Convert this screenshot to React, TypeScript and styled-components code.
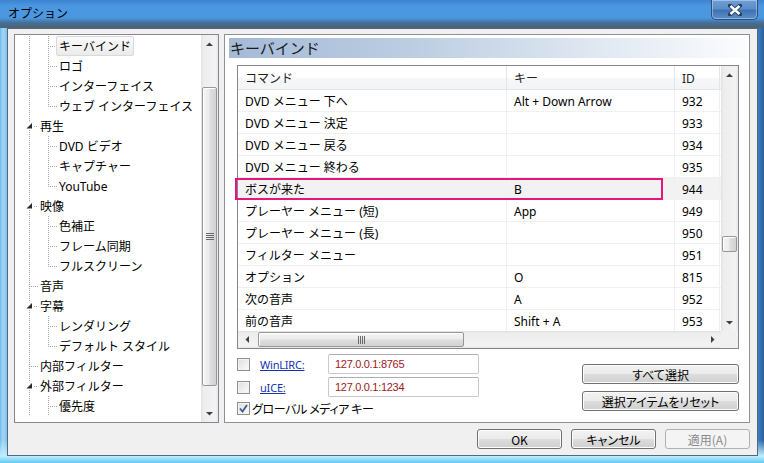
import React from 'react'
import styled, { createGlobalStyle, css } from 'styled-components'

const GlobalStyle = createGlobalStyle`
  html, body {
    margin: 0;
    padding: 0;
  }
  body {
    width: 764px;
    height: 463px;
    overflow: hidden;
    font-family: 'Noto Sans', 'Noto Sans CJK JP', sans-serif;
    font-size: 12px;
    color: #000;
  }
  * {
    box-sizing: border-box;
  }
`

const GOTHIC = `'Noto Sans CJK JP', sans-serif`

const Window = styled.div`
  width: 764px;
  height: 463px;
  display: flex;
  flex-direction: column;
  padding: 0 6px 7px 7px;
  background: linear-gradient(to bottom, rgba(255, 255, 255, 0) 440px, #bfeefc 456px, #63c9f2 463px),
    linear-gradient(to right, #6fb9ec 0, #a4d8f6 3px, #7cc1ee 7px, #5aa3e4 50%, #3f86d4 99%, #2c5e9a 100%);
`

const TitleBar = styled.div`
  height: 28px;
  margin: 0 -6px 0 -7px;
  padding: 0 6px 0 8px;
  display: flex;
  justify-content: space-between;
  align-items: flex-start;
  background: linear-gradient(to bottom, rgba(0, 0, 0, 0) 18px, rgba(60, 60, 60, 0.45) 23px, rgba(80, 76, 70, 0.7) 28px),
    linear-gradient(to bottom, #3b82d0 0, #4c98e0 6px, #4b96de 100%);
`

const TitleText = styled.span`
  font-family: ${GOTHIC};
  font-size: 12px;
  line-height: 16px;
  padding-top: 5px;
  color: #000;
`

const CloseButton = styled.div`
  width: 47px;
  height: 20px;
  display: flex;
  align-items: center;
  justify-content: center;
  border: 1px solid #2c4f7c;
  border-top: none;
  border-radius: 0 0 5px 5px;
  background: linear-gradient(to bottom, #6e9fd5 0, #5b8ec8 45%, #3f73b2 55%, #5a8fcc 100%);
  box-shadow: inset 0 0 0 1px rgba(255, 255, 255, 0.35);
`

const Client = styled.div`
  flex: 1;
  display: flex;
  flex-direction: column;
  background: #f0f0f0;
  border: 1px solid #56677a;
  padding: 5px 7px 0 6px;
`

const Body = styled.div`
  height: 389px;
  display: grid;
  grid-template-columns: 205px 1fr;
  column-gap: 5px;
`

/* ---------- tree ---------- */

const TreePanel = styled.div`
  border: 1px solid #828790;
  background: #fff;
  display: flex;
  overflow: hidden;
`

const TreeList = styled.div`
  flex: 1;
  padding: 1px 0 0 4px;
  overflow: hidden;
`

const TreeRow = styled.div`
  height: 20px;
  display: flex;
  align-items: center;
`

const TreeLabel = styled.span<{ $selected?: boolean }>`
  height: 20px;
  line-height: 16px;
  padding: 2px 2px 0 2px;
  border: 1px solid transparent;
  margin-left: -1px;
  white-space: nowrap;
  ${p =>
    p.$selected &&
    css`
      border-color: #d9d9d9;
      border-radius: 2px;
      background: linear-gradient(to bottom, #fafafa, #ebebeb);
    `}
`

const DOT = '#a5a5a5'

type Cell = 'through' | 'branch' | 'lastBranch' | 'expander'

const TreeCell = ({ kind }: { kind: Cell }) => (
  <svg width={19} height={20} style={{ display: 'block', flex: 'none' }}>
    {kind === 'through' && <line x1={10.5} y1={0} x2={10.5} y2={20} stroke={DOT} strokeDasharray="1 1" />}
    {kind === 'branch' && (
      <>
        <line x1={10.5} y1={0} x2={10.5} y2={20} stroke={DOT} strokeDasharray="1 1" />
        <line x1={12} y1={10.5} x2={19} y2={10.5} stroke={DOT} strokeDasharray="1 1" />
      </>
    )}
    {kind === 'lastBranch' && (
      <>
        <line x1={10.5} y1={0} x2={10.5} y2={11} stroke={DOT} strokeDasharray="1 1" />
        <line x1={12} y1={10.5} x2={19} y2={10.5} stroke={DOT} strokeDasharray="1 1" />
      </>
    )}
    {kind === 'expander' && (
      <>
        <line x1={10.5} y1={0} x2={10.5} y2={6} stroke={DOT} strokeDasharray="1 1" />
        <line x1={10.5} y1={14} x2={10.5} y2={20} stroke={DOT} strokeDasharray="1 1" />
        <polygon points="13,7 13,12.5 7.5,12.5" fill="#2b2b2b" />
        <line x1={15} y1={10.5} x2={19} y2={10.5} stroke={DOT} strokeDasharray="1 1" />
      </>
    )}
  </svg>
)

type TreeItem = { label: string; level: 1 | 2; open?: boolean; last?: boolean; selected?: boolean }

const treeItems: TreeItem[] = [
  { label: 'キーバインド', level: 2, selected: true },
  { label: 'ロゴ', level: 2 },
  { label: 'インターフェイス', level: 2 },
  { label: 'ウェブ インターフェイス', level: 2, last: true },
  { label: '再生', level: 1, open: true },
  { label: 'DVD ビデオ', level: 2 },
  { label: 'キャプチャー', level: 2 },
  { label: 'YouTube', level: 2, last: true },
  { label: '映像', level: 1, open: true },
  { label: '色補正', level: 2 },
  { label: 'フレーム同期', level: 2 },
  { label: 'フルスクリーン', level: 2, last: true },
  { label: '音声', level: 1 },
  { label: '字幕', level: 1, open: true },
  { label: 'レンダリング', level: 2 },
  { label: 'デフォルト スタイル', level: 2, last: true },
  { label: '内部フィルター', level: 1 },
  { label: '外部フィルター', level: 1, open: true },
  { label: '優先度', level: 2 },
]

/* ---------- scrollbars ---------- */

const VBar = styled.div`
  width: 17px;
  flex: none;
  display: flex;
  flex-direction: column;
  background: linear-gradient(to right, #e2e2e2 0, #ededed 15%, #f3f3f3 85%, #e6e6e6 100%);
`

const HBar = styled.div`
  height: 17px;
  display: flex;
  background: linear-gradient(to bottom, #e2e2e2 0, #ededed 15%, #f3f3f3 85%, #e6e6e6 100%);
`

const ArrowBox = styled.div`
  width: 17px;
  height: 17px;
  flex: none;
  display: flex;
  align-items: center;
  justify-content: center;
`

const Track = styled.div<{ $vertical?: boolean }>`
  flex: 1;
  display: flex;
  flex-direction: ${p => (p.$vertical ? 'column' : 'row')};
`

const VThumb = styled.div<{ $offset: number; $size: number }>`
  margin: ${p => p.$offset}px 1px 0 1px;
  height: ${p => p.$size}px;
  border: 1px solid #979797;
  border-radius: 2px;
  background: linear-gradient(to right, #f5f5f5 0, #ececec 45%, #dedede 55%, #d2d2d2 100%);
  box-shadow: inset 1px 1px 0 #fff;
  display: flex;
  align-items: center;
  justify-content: center;
`

const HThumb = styled.div<{ $offset: number; $size: number }>`
  margin: 1px 0 1px ${p => p.$offset}px;
  width: ${p => p.$size}px;
  border: 1px solid #979797;
  border-radius: 2px;
  background: linear-gradient(to bottom, #f5f5f5 0, #ececec 45%, #dedede 55%, #d2d2d2 100%);
  box-shadow: inset 1px 1px 0 #fff;
  display: flex;
  align-items: center;
  justify-content: center;
`

const Corner = styled.div`
  width: 17px;
  height: 17px;
  background: #f0f0f0;
`

type Dir = 'up' | 'down' | 'left' | 'right'

const Arrow = ({ dir }: { dir: Dir }) => {
  const vertical = dir === 'up' || dir === 'down'
  const points = {
    up: '0,4 3.5,0.5 7,4',
    down: '0,0 7,0 3.5,3.5',
    left: '4,0 4,7 0.5,3.5',
    right: '0,0 0,7 3.5,3.5',
  }[dir]
  return (
    <svg width={vertical ? 7 : 4} height={vertical ? 4 : 7} style={{ display: 'block' }}>
      <polygon points={points} fill="#3f3f3f" />
    </svg>
  )
}

const Grip = ({ vertical }: { vertical?: boolean }) => (
  <svg width={vertical ? 8 : 7} height={vertical ? 7 : 8} style={{ display: 'block' }}>
    {[0, 2, 4, 6].map(i =>
      vertical ? (
        <line key={i} x1={0} y1={i + 0.5} x2={8} y2={i + 0.5} stroke="#6a6a6a" />
      ) : (
        <line key={i} x1={i + 0.5} y1={0} x2={i + 0.5} y2={8} stroke="#6a6a6a" />
      )
    )}
  </svg>
)

/* ---------- right page ---------- */

const PagePanel = styled.div`
  border: 1px solid #8e9196;
  background: #fff;
  padding: 3px 2px 0 4px;
  display: flex;
  flex-direction: column;
`

const PageHeader = styled.div`
  height: 20px;
  line-height: 20px;
  padding-left: 1px;
  font-family: ${GOTHIC};
  font-size: 15px;
  color: #1b1b1b;
  background: linear-gradient(to right, #a4bad7 0, #bccde2 35%, #dfe7f1 70%, #fbfcfe 100%);
`

const ListFrame = styled.div`
  position: relative;
  margin: 7px 8px 0 8px;
  height: 284px;
  border: 1px solid #828790;
  display: grid;
  grid-template-columns: 1fr 17px;
  grid-template-rows: 1fr 17px;
`

const Viewport = styled.div`
  overflow: hidden;
  background: #fff;
`

const COLS = '269px 168px 45px'

const HeaderRow = styled.div`
  display: grid;
  grid-template-columns: ${COLS};
  height: 24px;
  background: linear-gradient(to bottom, #ffffff 0, #ffffff 50%, #f6f7f9 51%, #f3f4f6 100%);
  border-bottom: 1px solid #e3e4e6;
`

const HeaderCell = styled.div`
  padding: 2px 0 0 7px;
  line-height: 21px;
  border-right: 1px solid #e5e5e5;
  white-space: nowrap;
  color: #1e1e1e;
`

const DataRow = styled.div<{ $muted?: boolean }>`
  display: grid;
  grid-template-columns: ${COLS};
  height: 22px;
  border-bottom: 1px solid #f0f0f0;
  background: ${p => (p.$muted ? '#f2f2f2' : '#fff')};
`

const DataCell = styled.div`
  padding: 2px 0 0 7px;
  line-height: 19px;
  border-right: 1px solid #f0f0f0;
  white-space: nowrap;
  overflow: hidden;
`

const Marker = styled.div`
  position: absolute;
  left: -3px;
  top: 112px;
  width: 428px;
  height: 22px;
  border: 2px solid #e6167d;
  pointer-events: none;
`

const Lower = styled.div`
  margin: 5px 8px 0 8px;
  display: flex;
  justify-content: space-between;
`

const OptionColumn = styled.div`
  display: flex;
  flex-direction: column;
  gap: 3px;
`

const OptionRow = styled.div<{ $compact?: boolean }>`
  height: ${p => (p.$compact ? 16 : 20)}px;
  display: flex;
  align-items: center;
`

const CheckBox = styled.span<{ $gap: number }>`
  width: 13px;
  height: 13px;
  flex: none;
  margin-right: ${p => p.$gap}px;
  border: 1px solid #8f8f8f;
  background: linear-gradient(135deg, #dcdcdc 0, #f0f0f0 60%, #fbfbfb 100%);
  box-shadow: inset 0 0 0 1px #f4f4f4;
  display: flex;
  align-items: center;
  justify-content: center;
`

const LinkLabel = styled.span`
  width: 68px;
  font-size: 11px;
  color: #1533b0;
  text-decoration: underline;
  letter-spacing: -0.2px;
`

const AddressField = styled.div`
  width: 151px;
  height: 20px;
  border: 1px solid #c5c9d0;
  border-top-color: #abadb3;
  border-radius: 2px;
  background: #fff;
  padding-left: 6px;
  line-height: 18px;
  font-family: 'Liberation Sans', sans-serif;
  font-size: 11px;
  letter-spacing: -0.3px;
  color: #a01818;
`

const CheckText = styled.span`
  font-family: ${GOTHIC};
  font-feature-settings: 'palt';
  font-size: 12px;
  letter-spacing: -0.4px;
`

const ButtonColumn = styled.div`
  display: flex;
  flex-direction: column;
  gap: 7px;
  padding-top: 10px;
`

const PushButton = styled.button<{ $width: number }>`
  width: ${p => p.$width}px;
  height: 20px;
  padding: 0;
  border: 1px solid #707070;
  border-radius: 3px;
  background: linear-gradient(to bottom, #f2f2f2 0, #ebebeb 50%, #dddddd 51%, #cfcfcf 100%);
  box-shadow: inset 0 0 0 1px #fcfcfc;
  font-family: ${GOTHIC};
  font-feature-settings: 'palt';
  font-size: 12px;
  line-height: 17px;
  color: #000;
  &:disabled {
    border-color: #adb2b5;
    background: #f4f4f4;
    box-shadow: none;
    color: #8a8a8a;
  }
`

const Footer = styled.div`
  margin-top: 6px;
  display: flex;
  justify-content: flex-end;
  gap: 9px;
`

const rows: [string, string, string][] = [
  ['DVD メニュー 下へ', 'Alt + Down Arrow', '932'],
  ['DVD メニュー 決定', '', '933'],
  ['DVD メニュー 戻る', '', '934'],
  ['DVD メニュー 終わる', '', '935'],
  ['ボスが来た', 'B', '944'],
  ['プレーヤー メニュー (短)', 'App', '949'],
  ['プレーヤー メニュー (長)', '', '950'],
  ['フィルター メニュー', '', '951'],
  ['オプション', 'O', '815'],
  ['次の音声', 'A', '952'],
  ['前の音声', 'Shift + A', '953'],
]

const CheckMark = () => (
  <svg width={9} height={9} style={{ display: 'block' }}>
    <path d="M1 4.5 L3.5 7.5 L8 1" stroke="#3d5a94" strokeWidth={1.8} fill="none" />
  </svg>
)

export default function App() {
  return (
    <Window>
      <GlobalStyle />
      <TitleBar>
        <TitleText>オプション</TitleText>
        <CloseButton>
          <svg width={14} height={12}>
            <path d="M2 1.5 L12 10.5 M12 1.5 L2 10.5" stroke="#2a3f5e" strokeWidth={4.2} strokeLinecap="square" />
            <path d="M2.5 2 L11.5 10 M11.5 2 L2.5 10" stroke="#fff" strokeWidth={2.4} />
          </svg>
        </CloseButton>
      </TitleBar>
      <Client>
        <Body>
          <TreePanel>
            <TreeList>
              {treeItems.map(item => (
                <TreeRow key={item.label}>
                  {item.level === 1 ? (
                    <TreeCell kind={item.open ? 'expander' : 'branch'} />
                  ) : (
                    <>
                      <TreeCell kind="through" />
                      <TreeCell kind={item.last ? 'lastBranch' : 'branch'} />
                    </>
                  )}
                  <TreeLabel $selected={item.selected}>{item.label}</TreeLabel>
                </TreeRow>
              ))}
            </TreeList>
            <VBar>
              <ArrowBox>
                <Arrow dir="up" />
              </ArrowBox>
              <Track $vertical>
                <VThumb $offset={35} $size={299}>
                  <Grip vertical />
                </VThumb>
              </Track>
              <ArrowBox>
                <Arrow dir="down" />
              </ArrowBox>
            </VBar>
          </TreePanel>

          <PagePanel>
            <PageHeader>キーバインド</PageHeader>
            <ListFrame>
              <Viewport>
                <HeaderRow>
                  <HeaderCell>コマンド</HeaderCell>
                  <HeaderCell>キー</HeaderCell>
                  <HeaderCell>ID</HeaderCell>
                </HeaderRow>
                {rows.map(([cmd, key, id]) => (
                  <DataRow key={id} $muted={id === '944'}>
                    <DataCell>{cmd}</DataCell>
                    <DataCell>{key}</DataCell>
                    <DataCell>{id}</DataCell>
                  </DataRow>
                ))}
              </Viewport>
              <VBar>
                <ArrowBox>
                  <Arrow dir="up" />
                </ArrowBox>
                <Track $vertical>
                  <VThumb $offset={153} $size={16} />
                </Track>
                <ArrowBox>
                  <Arrow dir="down" />
                </ArrowBox>
              </VBar>
              <HBar>
                <ArrowBox>
                  <Arrow dir="left" />
                </ArrowBox>
                <Track>
                  <HThumb $offset={3} $size={206}>
                    <Grip />
                  </HThumb>
                </Track>
                <ArrowBox>
                  <Arrow dir="right" />
                </ArrowBox>
              </HBar>
              <Corner />
              <Marker />
            </ListFrame>

            <Lower>
              <OptionColumn>
                <OptionRow>
                  <CheckBox $gap={10} />
                  <LinkLabel>WinLIRC:</LinkLabel>
                  <AddressField>127.0.0.1:8765</AddressField>
                </OptionRow>
                <OptionRow>
                  <CheckBox $gap={10} />
                  <LinkLabel>uICE:</LinkLabel>
                  <AddressField>127.0.0.1:1234</AddressField>
                </OptionRow>
                <OptionRow $compact>
                  <CheckBox $gap={2}>
                    <CheckMark />
                  </CheckBox>
                  <CheckText>グローバル メディア キー</CheckText>
                </OptionRow>
              </OptionColumn>
              <ButtonColumn>
                <PushButton $width={157}>すべて選択</PushButton>
                <PushButton $width={157}>選択アイテムをリセット</PushButton>
              </ButtonColumn>
            </Lower>
          </PagePanel>
        </Body>
        <Footer>
          <PushButton $width={85}>OK</PushButton>
          <PushButton $width={85}>キャンセル</PushButton>
          <PushButton $width={85} disabled>
            適用(A)
          </PushButton>
        </Footer>
      </Client>
    </Window>
  )
}
